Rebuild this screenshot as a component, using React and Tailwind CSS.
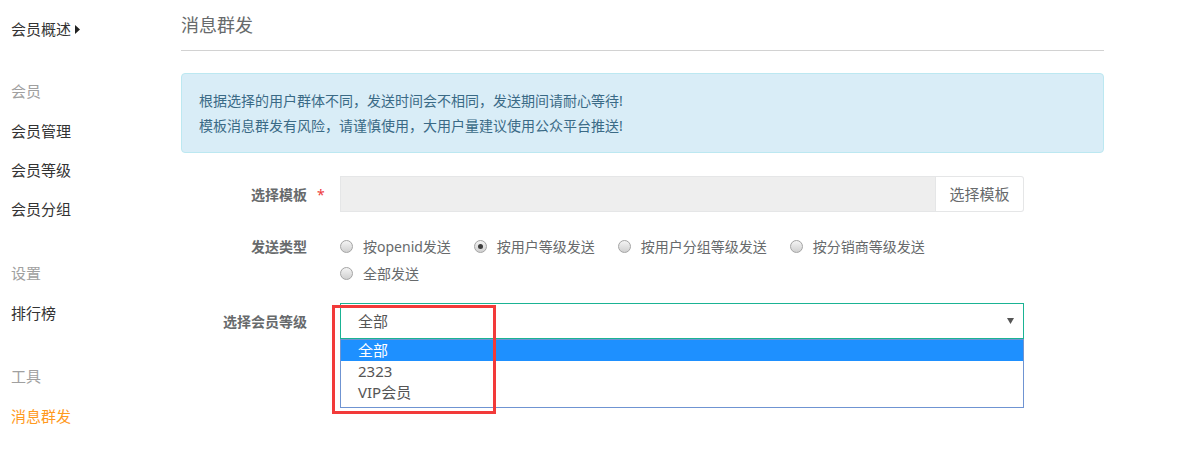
const font = { fontFamily: '"Noto Sans", "Noto Sans CJK SC", sans-serif' };

const Radio = ({ checked, label }) => (
  <label className="flex items-center mr-[23px] h-[27px]">
    <span className="w-[13px] h-[13px] rounded-full border border-[#a4a4a4] bg-linear-to-b from-[#f4f4f4] to-[#d0d0d0] flex items-center justify-center">
      {checked && <span className="w-[5px] h-[5px] rounded-full bg-[#3d3d3d]" />}
    </span>
    <span className="ml-[10px] text-[14px] text-[#676a6c]">{label}</span>
  </label>
);

const NavItem = ({ children, className = "" }) => (
  <div className={`h-[39px] flex items-center text-[15px] ${className}`}>{children}</div>
);

const NavHeader = ({ children, className = "" }) => (
  <div className={`h-[41px] flex items-center text-[15px] text-[#a0a0a0] ${className}`}>{children}</div>
);

const FormRow = ({ label, required, align = "center", children }) => (
  <div className={`flex ${align === "start" ? "items-start" : "items-center"}`}>
    <div className="w-[159px] flex justify-end items-center h-[27px] shrink-0">
      <span className="text-[14px] font-bold text-[#676a6c]">{label}</span>
      <span className="w-[33px] pl-[10px] text-[#ed3a3a] text-[14px]">{required ? "*" : ""}</span>
    </div>
    {children}
  </div>
);

export default function App() {
  return (
    <div className="w-[1187px] h-[464px] bg-white flex overflow-hidden" style={font}>
      {/* Sidebar */}
      <div className="w-[181px] shrink-0 pl-[11px] pt-[10px] text-[#333]">
        <NavItem>
          会员概述
          <svg width="5" height="9" viewBox="0 0 5 9" className="ml-[4px]">
            <path d="M0 0 L5 4.5 L0 9 Z" fill="#222" />
          </svg>
        </NavItem>
        <NavHeader className="mt-[22px]">会员</NavHeader>
        <NavItem>会员管理</NavItem>
        <NavItem>会员等级</NavItem>
        <NavItem>会员分组</NavItem>
        <NavHeader className="mt-[24px]">设置</NavHeader>
        <NavItem>排行榜</NavItem>
        <NavHeader className="mt-[23px]">工具</NavHeader>
        <NavItem className="text-[#ff9a1e]">消息群发</NavItem>
      </div>

      {/* Main */}
      <div className="w-[923px] shrink-0">
        <div className="h-[51px] border-b border-[#d2d2d2] flex items-center">
          <h2 className="text-[18px] text-[#676a6c] leading-none">消息群发</h2>
        </div>

        <div className="mt-[22px] h-[80px] rounded-[4px] border border-[#bce8f1] bg-[#d9edf7] pl-[17px] py-[14px] text-[14px] leading-[25px] text-[#3a6a86]">
          <p>根据选择的用户群体不同，发送时间会不相同，发送期间请耐心等待!</p>
          <p>模板消息群发有风险，请谨慎使用，大用户量建议使用公众平台推送!</p>
        </div>

        <div className="mt-[23px]">
          <FormRow label="选择模板" required>
            <div className="flex w-[684px] h-[36px]">
              <div className="flex-1 bg-[#eeeeee] border border-[#e5e6e7]" />
              <button className="w-[88px] bg-white border border-l-0 border-[#e5e6e7] rounded-r-[3px] text-[15px] text-[#676a6c]">
                选择模板
              </button>
            </div>
          </FormRow>

          <div className="mt-[21px]">
            <FormRow label="发送类型" align="start">
              <div>
                <div className="flex">
                  <Radio label="按openid发送" />
                  <Radio label="按用户等级发送" checked />
                  <Radio label="按用户分组等级发送" />
                  <Radio label="按分销商等级发送" />
                </div>
                <div className="flex">
                  <Radio label="全部发送" />
                </div>
              </div>
            </FormRow>
          </div>

          <div className="mt-[16px]">
            <FormRow label="选择会员等级">
              <div className="relative w-[684px]">
                <div className="h-[36px] border border-[#1ab394] flex items-center justify-between pl-[17px] pr-[9px] text-[15px] text-[#555]">
                  <span>全部</span>
                  <svg width="7" height="6" viewBox="0 0 7 6">
                    <path d="M0 0 H7 L3.5 6 Z" fill="#555" />
                  </svg>
                </div>
                <div className="absolute left-0 right-0 top-full border border-[#6f94d2] bg-white pb-[4px] text-[15px] text-[#555] z-10">
                  <div className="h-[21px] flex items-center pl-[17px] bg-[#1e90ff] text-white">全部</div>
                  <div className="h-[21px] flex items-center pl-[17px]">2323</div>
                  <div className="h-[21px] flex items-center pl-[17px]">VIP会员</div>
                </div>
                <div className="absolute left-[-8px] top-[2px] w-[164px] h-[109px] border-[3px] border-[#f23a3a] z-20 pointer-events-none" />
              </div>
            </FormRow>
          </div>
        </div>
      </div>
    </div>
  );
}
